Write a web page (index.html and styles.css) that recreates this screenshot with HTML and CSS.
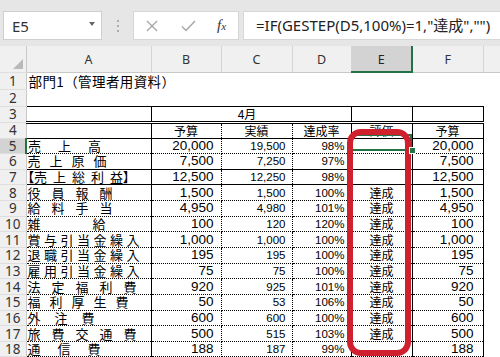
FILE: index.html
```html
<!DOCTYPE html>
<html lang="ja">
<head>
  <meta charset="UTF-8">
  <title>部門1</title>
  <link rel="stylesheet" href="styles.css">
</head>
<body>
  <div class="fbar">
    <div class="namebox"><span>E5</span><span class="caret"></span></div>
    <div class="grip">
      <svg width="4" height="14" viewBox="0 0 4 14"><circle cx="2" cy="2" r="1" fill="#9a9a9a"/><circle cx="2" cy="7" r="1" fill="#9a9a9a"/><circle cx="2" cy="12" r="1" fill="#9a9a9a"/></svg>
    </div>
    <div class="fbtns">
      <svg class="x" width="12" height="12" viewBox="0 0 12 12"><path d="M1 1L11 11M11 1L1 11" stroke="#a6a6a6" stroke-width="1.4" fill="none"/></svg>
      <svg class="ok" width="15" height="12" viewBox="0 0 15 12"><path d="M1 6.5L5 10.5L14 1" stroke="#a6a6a6" stroke-width="1.4" fill="none"/></svg>
      <span class="fx">f<small>x</small></span>
    </div>
    <div class="formula">=IF(GESTEP(D5,100%)=1,"達成","")</div>
  </div>

  <div class="wrap">
    <table class="sheet">
      <colgroup>
        <col class="c-h"><col class="c-a"><col class="c-b"><col class="c-c"><col class="c-d"><col class="c-e"><col class="c-f"><col>
      </colgroup>
      <tr class="head">
        <th class="corner"><span class="tri"></span></th><th>A</th><th>B</th><th>C</th><th>D</th><th class="on">E</th><th>F</th><th></th>
      </tr>
      <tr class="top">
        <th>1</th><td class="title">部門1（管理者用資料）</td><td></td><td></td><td></td><td></td><td></td><td></td>
      </tr>
      <tr class="top">
        <th>2</th><td></td><td></td><td></td><td></td><td></td><td></td><td></td>
      </tr>
      <tr class="r3">
        <th>3</th><td class="a"></td><td class="mon" colspan="3">4月</td><td class="e"></td><td class="f"></td><td></td>
      </tr>
      <tr class="r4">
        <th>4</th><td class="a"></td><td class="b cap">予算</td><td class="c cap">実績</td><td class="d cap">達成率</td><td class="e cap">評価</td><td class="f cap">予算</td><td></td>
      </tr>
      <tr class="row">
        <th class="on">5</th><td class="a"><span class="ls17">売上</span>高</td><td class="b">20,000</td><td class="c">19,500</td><td class="d">98%</td><td class="e"></td><td class="f">20,000</td><td></td>
      </tr>
      <tr class="row solid">
        <th>6</th><td class="a"><span class="ls9">売上原</span>価</td><td class="b">7,500</td><td class="c">7,250</td><td class="d">97%</td><td class="e"></td><td class="f">7,500</td><td></td>
      </tr>
      <tr class="row solid">
        <th>7</th><td class="a"><span class="brk">【</span><span class="ls6">売上総利</span>益<span class="brk">】</span></td><td class="b">12,500</td><td class="c">12,250</td><td class="d">98%</td><td class="e"></td><td class="f">12,500</td><td></td>
      </tr>
      <tr class="row">
        <th>8</th><td class="a"><span class="ls11">役員報</span>酬</td><td class="b">1,500</td><td class="c">1,500</td><td class="d">100%</td><td class="e">達成</td><td class="f">1,500</td><td></td>
      </tr>
      <tr class="row">
        <th>9</th><td class="a"><span class="ls11">給料手</span>当</td><td class="b">4,950</td><td class="c">4,980</td><td class="d">101%</td><td class="e">達成</td><td class="f">4,950</td><td></td>
      </tr>
      <tr class="row">
        <th>10</th><td class="a"><span class="ls52">雑</span>給</td><td class="b">100</td><td class="c">120</td><td class="d">120%</td><td class="e">達成</td><td class="f">100</td><td></td>
      </tr>
      <tr class="row">
        <th>11</th><td class="a"><span class="ls3">賞与引当金繰</span>入</td><td class="b">1,000</td><td class="c">1,000</td><td class="d">100%</td><td class="e">達成</td><td class="f">1,000</td><td></td>
      </tr>
      <tr class="row">
        <th>12</th><td class="a"><span class="ls3">退職引当金繰</span>入</td><td class="b">195</td><td class="c">195</td><td class="d">100%</td><td class="e">達成</td><td class="f">195</td><td></td>
      </tr>
      <tr class="row">
        <th>13</th><td class="a"><span class="ls3">雇用引当金繰</span>入</td><td class="b">75</td><td class="c">75</td><td class="d">100%</td><td class="e">達成</td><td class="f">75</td><td></td>
      </tr>
      <tr class="row">
        <th>14</th><td class="a"><span class="ls11">法定福利</span>費</td><td class="b">920</td><td class="c">925</td><td class="d">101%</td><td class="e">達成</td><td class="f">920</td><td></td>
      </tr>
      <tr class="row">
        <th>15</th><td class="a"><span class="ls9">福利厚生</span>費</td><td class="b">50</td><td class="c">53</td><td class="d">106%</td><td class="e">達成</td><td class="f">50</td><td></td>
      </tr>
      <tr class="row">
        <th>16</th><td class="a"><span class="ls14">外注</span>費</td><td class="b">600</td><td class="c">600</td><td class="d">100%</td><td class="e">達成</td><td class="f">600</td><td></td>
      </tr>
      <tr class="row">
        <th>17</th><td class="a"><span class="ls11">旅費交通</span>費</td><td class="b">500</td><td class="c">515</td><td class="d">103%</td><td class="e">達成</td><td class="f">500</td><td></td>
      </tr>
      <tr class="row">
        <th>18</th><td class="a"><span class="ls17">通信</span>費</td><td class="b">188</td><td class="c">187</td><td class="d">99%</td><td class="e"></td><td class="f">188</td><td></td>
      </tr>
      <tr class="row">
        <th></th><td></td><td></td><td></td><td></td><td></td><td></td><td></td>
      </tr>
    </table>

    <!-- 選択セル E5 と赤い囲み -->
    <div class="selbox"></div>
    <div class="mark"></div>
    <div class="handle"></div>
  </div>
</body>
</html>
```

FILE: styles.css
```css
body {
  margin: 0;
  width: 500px;
  height: 357px;
  overflow: hidden;
  background: #fff;
  font-family: "Noto Sans", "Noto Sans CJK JP", sans-serif;
}

/* 数式バー */
.fbar {
  height: 46px;
  box-sizing: border-box;
  padding-top: 11px;
  background: #e6e6e6;
  display: flex;
  align-items: flex-start;
}

.namebox {
  margin-left: 3px;
  width: 99px;
  height: 29px;
  box-sizing: border-box;
  background: #fff;
  border: 1px solid #cfcfcf;
  display: flex;
  align-items: center;
  justify-content: space-between;
  padding: 0 6px 0 8px;
  font-size: 15px;
  color: #333;
}

.caret {
  width: 0;
  height: 0;
  border-left: 3.5px solid transparent;
  border-right: 3.5px solid transparent;
  border-top: 4px solid #666;
  margin-top: -3px;
}

.grip {
  width: 31px;
  height: 29px;
  display: flex;
  align-items: center;
  justify-content: center;
}

.fbtns {
  width: 106px;
  height: 29px;
  box-sizing: border-box;
  background: #fff;
  border: 1px solid #d6d6d6;
  display: flex;
  align-items: center;
  padding-left: 12px;
}

.fbtns .x {
  margin-right: 23px;
}

.fbtns .ok {
  margin-right: 21px;
}

.fx {
  font-family: "Liberation Serif", serif;
  font-style: italic;
  font-size: 15px;
  color: #333;
}

.fx small {
  font-size: 11px;
}

.formula {
  flex: 1;
  margin-left: 4px;
  height: 29px;
  box-sizing: border-box;
  background: #fff;
  border: 1px solid #d6d6d6;
  border-right: none;
  padding-left: 12px;
  font-size: 15px;
  line-height: 27px;
  color: #222;
  white-space: nowrap;
  overflow: hidden;
}

/* シート */
.wrap {
  position: relative;
}

.sheet {
  table-layout: fixed;
  border-collapse: collapse;
  width: 520px;
  font-family: "Noto Sans CJK JP", sans-serif;
  font-size: 13px;
  color: #000;
}

.c-h { width: 26px; }
.c-a { width: 125px; }
.c-b { width: 70px; }
.c-c { width: 71px; }
.c-d { width: 59px; }
.c-e { width: 61px; }
.c-f { width: 71px; }

th, td {
  padding: 0;
  white-space: nowrap;
  overflow: visible;
  line-height: 14px;
}

.head th {
  height: 23px;
  background: #f0f0f0;
  border-right: 1px solid #d4d4d4;
  border-bottom: 1px solid #c8c8c8;
  font-family: "Noto Sans", sans-serif;
  font-weight: normal;
  font-size: 12.5px;
  color: #333;
  padding-top: 2px;
}

.head th.on {
  background: #d3d3d3;
  border-bottom: 2px solid #217346;
  color: #222;
}

.corner {
  position: relative;
}

.tri {
  position: absolute;
  right: 3px;
  bottom: 3px;
  width: 0;
  height: 0;
  border-left: 10px solid transparent;
  border-bottom: 10px solid #b9b9b9;
}

tr > th:first-child {
  background: #f0f0f0;
  border-right: 1px solid #c8c8c8;
  border-bottom: 1px solid #dedede;
  font-family: "Noto Sans", sans-serif;
  font-weight: normal;
  font-size: 13.5px;
  color: #333;
  text-align: center;
}

tr > th.on {
  background: #d3d3d3;
  border-right: 2px solid #217346;
}

.top { height: 17px; }
.r3 { height: 16px; }
.r4 { height: 16px; }
.row { height: 15.65px; }

.title {
  padding-left: 2px;
  font-size: 13.5px;
  letter-spacing: 0.4px;
}

/* 罫線 */
.r3 td {
  border-top: 1px solid #000;
  border-bottom: 3px double #000;
}

.r3 td:last-child,
.r4 td:last-child,
.row td:last-child {
  border-top: none;
  border-bottom: none;
}

.row td, .r4 td {
  border-bottom: 1px dotted #000;
}

.solid td {
  border-bottom: 1px solid #000;
}

.r4 td {
  border-bottom: 1px solid #000;
}

td.a {
  border-left: 1px solid #000;
  border-right: 1px solid #000;
  padding-left: 1px;
}

td.b, td.c {
  border-right: 1px dotted #000;
}

td.d, td.e, td.f, td.mon {
  border-right: 1px solid #000;
}

td.b, td.f {
  text-align: right;
  font-family: "Liberation Sans", sans-serif;
  font-size: 13.5px;
}

td.b { padding-right: 7px; }
td.f { padding-right: 9px; }

td.c, td.d {
  text-align: right;
  font-family: "Liberation Sans Narrow", "Liberation Sans", sans-serif;
  font-size: 11.5px;
  padding-right: 6px;
}

td.e {
  text-align: center;
  font-size: 12px;
}

td.cap {
  text-align: center;
  font-family: "Noto Sans CJK JP", sans-serif;
  font-size: 12px;
  padding-right: 0;
}

.mon {
  text-align: center;
  font-size: 12px;
  padding-right: 8px;
}

/* 字間 */
.ls3 { letter-spacing: 3.5px; }
.ls6 { letter-spacing: 6px; }
.ls9 { letter-spacing: 9px; }
.ls11 { letter-spacing: 11px; }
.ls14 { letter-spacing: 14px; }
.ls17 { letter-spacing: 17px; }
.ls52 { letter-spacing: 52px; }

.brk {
  font-feature-settings: "palt";
}

/* 重ね表示 */
.selbox {
  position: absolute;
  left: 351px;
  top: 88px;
  width: 61px;
  height: 17px;
  box-sizing: border-box;
  border: 2px solid #217346;
}

.mark {
  position: absolute;
  left: 347px;
  top: 83px;
  width: 64px;
  height: 227px;
  box-sizing: border-box;
  border: 6px solid #d1202d;
  border-radius: 14px;
}

.handle {
  position: absolute;
  left: 409px;
  top: 101px;
  width: 5px;
  height: 5px;
  background: #217346;
  border: 1px solid #fff;
}
```
